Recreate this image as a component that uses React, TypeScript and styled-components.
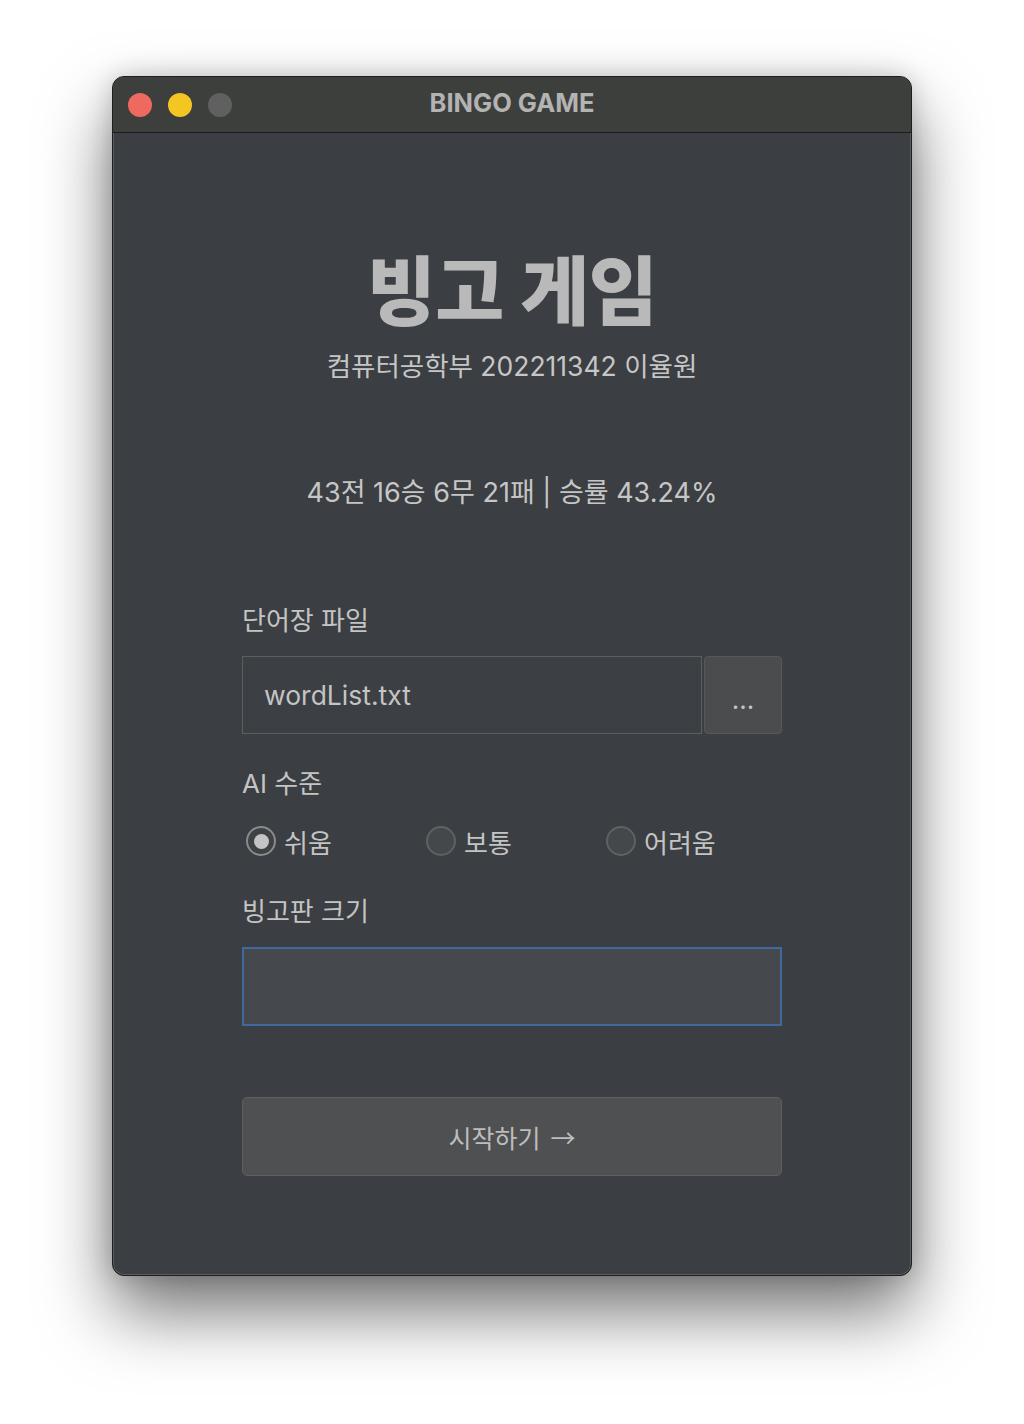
import styled, { createGlobalStyle } from 'styled-components'

const GlobalStyle = createGlobalStyle`
    html, body {
        margin: 0;
        padding: 0;
        background: #ffffff;
    }
    body {
        font-family: Inter, "Noto Sans CJK KR", "Noto Sans", sans-serif;
    }
`

const Page = styled.div`
    padding: 76px 112px 148px;
`

const Window = styled.div`
    width: 800px;
    height: 1200px;
    box-sizing: border-box;
    background: #3b3e42;
    border: 1px solid #1f1f1f;
    border-radius: 12px;
    overflow: hidden;
    box-shadow: inset 0 0 0 1px #5a5b5c, 0 36px 70px rgba(0, 0, 0, 0.55), 0 0 24px rgba(0, 0, 0, 0.18);
    display: flex;
    flex-direction: column;
`

const TitleBar = styled.div`
    height: 55px;
    flex: none;
    background: #3d3f3d;
    border-bottom: 1px solid #1b1b1b;
    display: flex;
    align-items: center;
    position: relative;
    padding-left: 15px;
    gap: 16px;
`

const Light = styled.span<{ color: string }>`
    width: 24px;
    height: 24px;
    border-radius: 50%;
    background: ${(p) => p.color};
`

const Title = styled.div`
    position: absolute;
    left: 0;
    right: 0;
    top: 11px;
    line-height: 30px;
    text-align: center;
    font-weight: 700;
    font-size: 25.5px;
    color: #b3b3b3;
    pointer-events: none;
`

const Content = styled.div`
    width: 540px;
    margin: 0 auto;
    padding-top: 112px;
    display: flex;
    flex-direction: column;
    color: #c4c4c4;
`

const Heading = styled.h1`
    margin: 0;
    font-family: "Noto Sans CJK KR", sans-serif;
    font-size: 75px;
    font-weight: 900;
    line-height: 84px;
    letter-spacing: -0.5px;
    text-align: center;
    color: #b9b9b9;
`

const Centered = styled.p<{ top: number; size: number }>`
    margin: ${(p) => p.top}px 0 0;
    font-size: ${(p) => p.size}px;
    line-height: 36px;
    text-align: center;
    color: #c6c6c6;
`

const Label = styled.div<{ top: number }>`
    margin-top: ${(p) => p.top}px;
    font-size: 26px;
    line-height: 36px;
    color: #c4c4c4;
`

const FileRow = styled.div`
    margin-top: 17px;
    display: flex;
    gap: 2px;
    height: 78px;
`

const FileField = styled.div`
    flex: 1;
    box-sizing: border-box;
    border: 1.5px solid #5b5d5f;
    background: #3c3f43;
    display: flex;
    align-items: center;
    padding-left: 21px;
    font-size: 26.5px;
    color: #c4c4c4;
`

const BrowseButton = styled.button`
    width: 78px;
    box-sizing: border-box;
    border: 1.5px solid #56585a;
    border-radius: 4px;
    background: #4a4c4e;
    color: #c4c4c4;
    font-family: inherit;
    font-size: 26px;
    padding: 8px 0 0;
`

const RadioRow = styled.div`
    margin-top: 21px;
    display: flex;
    height: 36px;
`

const RadioOption = styled.label`
    width: 180px;
    display: flex;
    align-items: center;
    gap: 8px;
    padding-left: 4px;
    font-size: 26px;
    color: #c4c4c4;
`

const RadioDot = styled.span<{ checked?: boolean }>`
    width: 30px;
    height: 30px;
    box-sizing: border-box;
    border-radius: 50%;
    border: 2px solid ${(p) => (p.checked ? '#8a8b8c' : '#5f6163')};
    background: ${(p) => (p.checked ? '#3f4245' : '#45484b')};
    display: flex;
    align-items: center;
    justify-content: center;
    &::after {
        content: '';
        display: ${(p) => (p.checked ? 'block' : 'none')};
        width: 15px;
        height: 15px;
        border-radius: 50%;
        background: #c4c4c4;
    }
`

const SizeField = styled.div`
    margin-top: 17px;
    height: 79px;
    box-sizing: border-box;
    border: 2px solid #3e6a9e;
    background: #45484c;
`

const StartButton = styled.button`
    margin-top: 71px;
    height: 79px;
    box-sizing: border-box;
    border: 1.5px solid #5e5f61;
    border-radius: 5px;
    background: #4f5052;
    color: #bdbdbd;
    font-family: "Noto Sans CJK KR", sans-serif;
    font-size: 25px;
    display: flex;
    align-items: center;
    justify-content: center;
    gap: 10px;
`

function App() {
    return (
        <Page>
            <GlobalStyle />
            <Window>
                <TitleBar>
                    <Light color='#ee6a5f' />
                    <Light color='#f4c622' />
                    <Light color='#5f605f' />
                    <Title>BINGO GAME</Title>
                </TitleBar>
                <Content>
                    <Heading>빙고 게임</Heading>
                    <Centered top={19} size={26.5}>컴퓨터공학부 202211342 이율원</Centered>
                    <Centered top={91} size={27}>43전 16승 6무 21패 | 승률 43.24%</Centered>

                    <Label top={92}>단어장 파일</Label>
                    <FileRow>
                        <FileField>wordList.txt</FileField>
                        <BrowseButton>...</BrowseButton>
                    </FileRow>

                    <Label top={32}>AI 수준</Label>
                    <RadioRow>
                        <RadioOption><RadioDot checked />쉬움</RadioOption>
                        <RadioOption><RadioDot />보통</RadioOption>
                        <RadioOption><RadioDot />어려움</RadioOption>
                    </RadioRow>

                    <Label top={35}>빙고판 크기</Label>
                    <SizeField />

                    <StartButton>시작하기 <span>→</span></StartButton>
                </Content>
            </Window>
        </Page>
    )
}

export default App
